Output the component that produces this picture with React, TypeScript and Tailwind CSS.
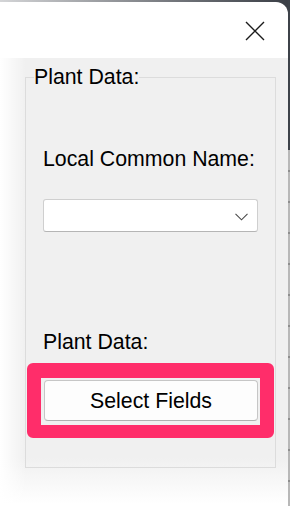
import * as React from 'react';

const font = {fontFamily: '"Liberation Sans", Arial, sans-serif'};

function CloseIcon() {
  return (
    <svg width="20" height="20" viewBox="0 0 20 20" fill="none">
      <path d="M1 1L19 19M19 1L1 19" stroke="#1b1b1b" strokeWidth="1.4"/>
    </svg>
  );
}

function Chevron() {
  return (
    <svg width="13" height="8" viewBox="0 0 13 8" fill="none">
      <path d="M0.5 0.8L6.5 6.8L12.5 0.8" stroke="#4a4a4a" strokeWidth="1.1"/>
    </svg>
  );
}

export default function App() {
  return (
    <div
      style={font}
      className="flex h-[506px] w-[290px] overflow-hidden bg-gradient-to-r from-[#d4d5d7] to-[#3a3e45] text-[21.3px] leading-[24px] text-black">
      <div className="mt-[2px] flex w-[288px] flex-col overflow-hidden rounded-tr-[12px] bg-white">
        {/* title bar */}
        <div className="flex h-[56px] shrink-0 items-center justify-end pr-[23px] pt-[2px]">
          <CloseIcon/>
        </div>

        {/* body */}
        <div
          className="flex-1 bg-[linear-gradient(to_right,#ffffff,#ffffff00_26px),linear-gradient(to_bottom,#f0f0f0_400px,#ffffff_446px)]">
          <fieldset className="ml-[25px] mt-[7px] h-[403px] w-[251px] min-w-0 border border-[#dcdcdc] px-[17px]">
            <legend className="ml-[-9px] leading-[24px]">Plant Data:</legend>

            <div className="mt-[58px]">Local Common Name:</div>

            <div
              className="mt-[28px] flex h-[33px] w-full items-center justify-end rounded-[3px] border border-[#cfcfcf] border-b-[#b5b5b5] bg-white pr-[9px] pt-[2px]">
              <Chevron/>
            </div>

            <div className="mt-[98px]">Plant Data:</div>

            <div
              className="-mx-[16px] mt-[9px] rounded-[6px] border-x-[14px] border-b-[13px] border-t-[15px] border-[#ff2d6a] bg-[#f0f0f0] pb-[4px] pl-[3px] pr-[2px] pt-[2px]">
              <button
                type="button"
                className="flex h-[41px] w-full items-center justify-center rounded-[4px] border border-[#c6c6c6] border-b-[#b0b0b0] bg-[#fdfdfd] text-[21.3px]">
                Select Fields
              </button>
            </div>
          </fieldset>
        </div>
      </div>

      {/* edge of the window behind */}
      <div className="flex w-[2px] flex-col">
        <div className="h-[150px] bg-[#3d4249]"/>
        <div
          className="flex-1 bg-[repeating-linear-gradient(to_bottom,#b8b8b8_0px,#b8b8b8_20px,#8e8e8e_20px,#8e8e8e_22px,#b8b8b8_22px,#b8b8b8_31px)]"/>
      </div>
    </div>
  );
}
